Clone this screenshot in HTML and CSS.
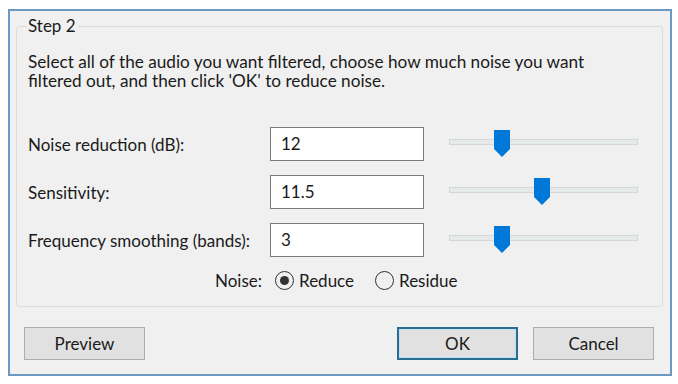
FILE: index.html
```html
<!DOCTYPE html>
<html lang="en">
<head>
  <meta charset="UTF-8">
  <title>Noise Reduction</title>
  <link rel="stylesheet" href="styles.css">
</head>
<body>
  <div class="dialog">
    <!-- Step 2 group -->
    <fieldset class="group">
      <legend>Step 2</legend>
      <p class="intro">Select all of the audio you want filtered, choose how much noise you want<br>filtered out, and then click 'OK' to reduce noise.</p>

      <div class="params">
        <label class="param-label">Noise reduction (dB):</label>
        <div class="field">12</div>
        <div class="slider"><span class="thumb" style="left: 44px"></span></div>

        <label class="param-label">Sensitivity:</label>
        <div class="field">11.5</div>
        <div class="slider"><span class="thumb" style="left: 84px"></span></div>

        <label class="param-label">Frequency smoothing (bands):</label>
        <div class="field">3</div>
        <div class="slider"><span class="thumb" style="left: 44px"></span></div>
      </div>

      <div class="noise-row">
        <span class="noise-label">Noise:</span>
        <span class="radio checked"></span><span class="radio-text">Reduce</span>
        <span class="radio"></span><span class="radio-text">Residue</span>
      </div>
    </fieldset>

    <!-- buttons -->
    <div class="buttons">
      <button class="btn">Preview</button>
      <div class="spacer"></div>
      <button class="btn default">OK</button>
      <button class="btn">Cancel</button>
    </div>
  </div>
</body>
</html>
```

FILE: styles.css
```css
body {
  margin: 0;
  padding: 0;
  background: #fff;
  font-family: Lato, "Open Sans", sans-serif;
  font-size: 17px;
  color: #1a1a1a;
}

.dialog {
  margin: 9px 0 0 8px;
  width: 660px;
  height: 363px;
  background: #f0f0f0;
  border: 2px solid #6d98c2;
  display: flex;
  flex-direction: column;
}

.group {
  margin: 6px 7px 0 6px;
  padding: 0 0 0 11px;
  border: 1px solid #dcdcdc;
  border-radius: 3px;
  height: 290px;
  box-sizing: border-box;
}

.group legend {
  padding: 0 2px 0 1px;
  margin-left: -1px;
  line-height: 18px;
}

.intro {
  margin: 17px 0 0;
  line-height: 19px;
  font-size: 17.2px;
}

.params {
  display: grid;
  grid-template-columns: 217px 154px 189px;
  column-gap: 25px;
  row-gap: 14px;
  align-items: center;
  margin-top: 37px;
}

.param-label {
  white-space: nowrap;
}

.field {
  height: 34px;
  box-sizing: border-box;
  border: 1px solid #7a7a7a;
  background: #fff;
  padding: 0 10px;
  line-height: 32px;
}

.slider {
  position: relative;
  top: -2px;
  height: 4px;
  background: #e7eaea;
  border: 1px solid #d6d6d6;
}

.thumb {
  position: absolute;
  top: -10px;
  width: 16px;
  height: 27px;
  background: #0078d7;
  clip-path: polygon(0 0, 100% 0, 100% 70%, 50% 100%, 0 70%);
}

.noise-row {
  display: flex;
  align-items: center;
  margin-top: 13px;
  padding-left: 187px;
}

.noise-label {
  margin-right: 13px;
}

.radio {
  width: 19px;
  height: 19px;
  box-sizing: border-box;
  border: 1.5px solid #333;
  border-radius: 50%;
  margin-right: 5px;
  position: relative;
}

.radio.checked::after {
  content: "";
  position: absolute;
  left: 3.5px;
  top: 3.5px;
  width: 9px;
  height: 9px;
  border-radius: 50%;
  background: #333;
}

.radio-text {
  margin-right: 21px;
}

.buttons {
  display: flex;
  align-items: center;
  margin: 20px 0 0 14px;
  padding-right: 16px;
}

.spacer {
  flex: 1;
}

.btn {
  width: 121px;
  height: 33px;
  margin-left: 15px;
  background: #e1e1e1;
  border: 1px solid #adadad;
  font-family: inherit;
  font-size: 17px;
  color: #1a1a1a;
  padding: 0;
}

.btn:first-child {
  margin-left: 0;
}

.btn.default {
  border: 2px solid #2b6d91;
  box-shadow: inset 0 0 0 1px #bfe0f5;
}
```
